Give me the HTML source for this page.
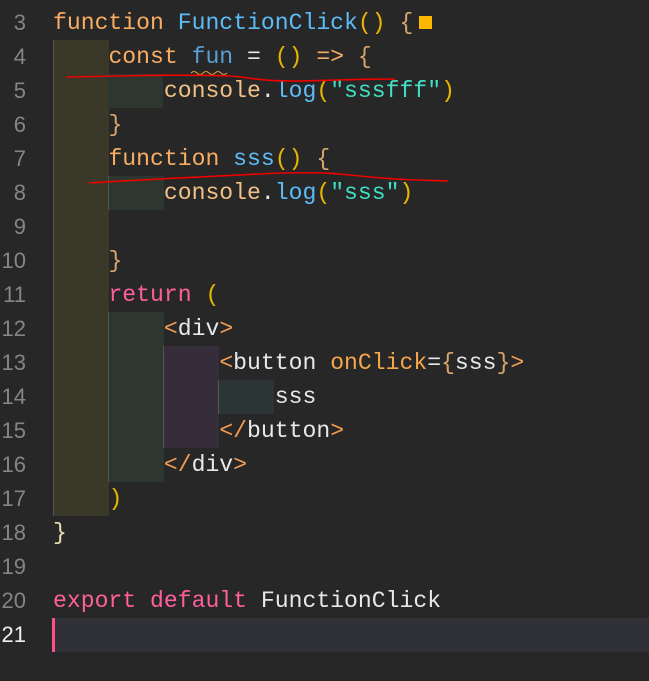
<!DOCTYPE html>
<html><head><meta charset="utf-8"><style>
html,body{margin:0;padding:0;background:#272727;width:649px;height:681px;overflow:hidden;position:relative}
.b{position:absolute}
.ln{position:absolute;left:0;width:26px;text-align:right;font:22px "Liberation Sans",sans-serif;color:#858585;line-height:34px}
.c{position:absolute;left:53px;font:23.1px "Liberation Mono",monospace;line-height:34px;white-space:pre;color:#e8e8e8}
.k{color:#f8ad62}.f{color:#5cbcf6}.p{color:#e8b600}.br{color:#d8a56b}.s{color:#3fe0c5}.v{color:#5a9fd6}.r{color:#ff5f9a}.o{color:#f2c185}.t{color:#f59d52}.a{color:#f5a64a}
</style></head><body>
<div class="b" style="left:53px;top:40px;width:55px;height:476px;background:#393829;border-left:1px solid #555"></div>
<div class="b" style="left:108px;top:74px;width:55px;height:34px;background:#2e372f"></div>
<div class="b" style="left:108px;top:176px;width:55px;height:34px;background:#2e372f;border-left:1px solid #555"></div>
<div class="b" style="left:108px;top:312px;width:55px;height:170px;background:#2e372f;border-left:1px solid #555"></div>
<div class="b" style="left:163px;top:346px;width:55px;height:102px;background:#352d3a;border-left:1px solid #555"></div>
<div class="b" style="left:218px;top:380px;width:55px;height:34px;background:#2b3535;border-left:1px solid #555"></div>
<div class="b" style="left:53px;top:618px;width:596px;height:34px;background:#2f3136"></div>
<div class="b" style="left:52px;top:618px;width:3px;height:34px;background:#ff4f8a"></div>
<div class="b" style="left:419px;top:16px;width:13px;height:13px;background:#ffb800"></div>

<div class="ln" style="top:6px">3</div><div class="ln" style="top:40px">4</div><div class="ln" style="top:74px">5</div><div class="ln" style="top:108px">6</div><div class="ln" style="top:142px">7</div><div class="ln" style="top:176px">8</div><div class="ln" style="top:210px">9</div><div class="ln" style="top:244px">10</div><div class="ln" style="top:278px">11</div><div class="ln" style="top:312px">12</div><div class="ln" style="top:346px">13</div><div class="ln" style="top:380px">14</div><div class="ln" style="top:414px">15</div><div class="ln" style="top:448px">16</div><div class="ln" style="top:482px">17</div><div class="ln" style="top:516px">18</div><div class="ln" style="top:550px">19</div><div class="ln" style="top:584px">20</div><div class="ln" style="top:618px;color:#f0f0f0">21</div>

<div class="c" style="top:6px"><span class="k">function</span> <span class="f">FunctionClick</span><span class="p">()</span> <span class="br">{</span></div>
<div class="c" style="top:40px">    <span class="k">const</span> <span class="v">fun</span> = <span class="p">()</span> <span class="k">=&gt;</span> <span class="br">{</span></div>
<div class="c" style="top:74px">        <span class="o">console</span>.<span class="f">log</span><span class="p">(</span><span class="s">"sssfff"</span><span class="p">)</span></div>
<div class="c" style="top:108px">    <span class="br">}</span></div>
<div class="c" style="top:142px">    <span class="k">function</span> <span class="f">sss</span><span class="p">()</span> <span class="br">{</span></div>
<div class="c" style="top:176px">        <span class="o">console</span>.<span class="f">log</span><span class="p">(</span><span class="s">"sss"</span><span class="p">)</span></div>
<div class="c" style="top:244px">    <span class="br">}</span></div>
<div class="c" style="top:278px">    <span class="r">return</span> <span class="p">(</span></div>
<div class="c" style="top:312px">        <span class="t">&lt;</span>div<span class="t">&gt;</span></div>
<div class="c" style="top:346px">            <span class="t">&lt;</span>button <span class="a">onClick</span>=<span class="br">{</span>sss<span class="br">}</span><span class="t">&gt;</span></div>
<div class="c" style="top:380px">                sss</div>
<div class="c" style="top:414px">            <span class="t">&lt;/</span>button<span class="t">&gt;</span></div>
<div class="c" style="top:448px">        <span class="t">&lt;/</span>div<span class="t">&gt;</span></div>
<div class="c" style="top:482px">    <span class="p">)</span></div>
<div class="c" style="top:516px"><span class="br" style="color:#e8e0b0">}</span></div>
<div class="c" style="top:584px"><span class="r">export</span> <span class="r">default</span> FunctionClick</div>

<svg class="b" style="left:0;top:0" width="649" height="681">
<path d="M191 73 q3 -3 6 0 t6 0 t6 0 t6 0 t6 0 t6 0" stroke="#e0a040" fill="none" stroke-width="1"/>
<path d="M66 77 C120 76 180 74 230 76 C260 78 250 81 300 81 C340 80 370 79 395 79" stroke="#ee0000" fill="none" stroke-width="1.6"/>
<path d="M89 183 C150 179 220 176 280 173 C330 172 340 174 360 176 C400 180 420 180 448 181" stroke="#ee0000" fill="none" stroke-width="1.6"/>
</svg>
</body></html>
